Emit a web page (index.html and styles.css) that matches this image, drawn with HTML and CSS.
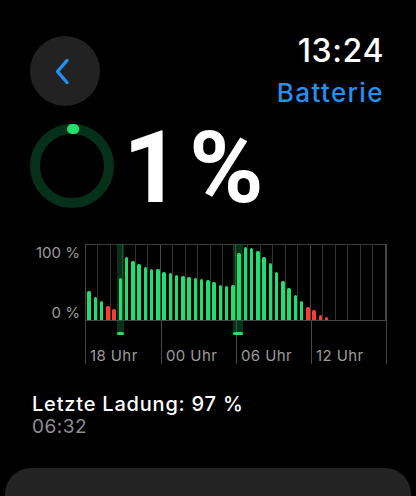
FILE: index.html
```html
<!DOCTYPE html>
<html lang="de">
<head>
  <meta charset="UTF-8">
  <title>Batterie</title>
  <link rel="stylesheet" href="styles.css">
</head>
<body>
  <header class="top">
    <button class="back" aria-label="Zurück">
      <svg width="70" height="70" viewBox="0 0 70 70">
        <path d="M37 24.5 L27.5 35.5 L37 46.5" fill="none" stroke="#2391f3" stroke-width="3.4" stroke-linecap="round" stroke-linejoin="round"/>
      </svg>
    </button>
    <div class="title-col">
      <div class="clock">13:24</div>
      <div class="title">Batterie</div>
    </div>
  </header>

  <section class="hero">
    <svg class="ring" width="84" height="84" viewBox="0 0 84 84">
      <circle cx="42" cy="42" r="37" fill="none" stroke="#05301a" stroke-width="10"/>
      <circle cx="42" cy="42" r="37" fill="none" stroke="#1fe06c" stroke-width="10" stroke-linecap="round" stroke-dasharray="2.3 400" transform="rotate(-90 42 42)"/>
    </svg>
    <div class="percent"><span class="digit">1</span>%</div>
  </section>

  <section class="chart">
    <div class="y-axis">
      <span>100 %</span>
      <span>0 %</span>
    </div>
    <div class="plot-wrap">
      <div class="plot">
        <div class="slot"><i class="bar" style="height:29px"></i></div>
        <div class="slot"><i class="bar" style="height:23px"></i></div>
        <div class="slot"><i class="bar" style="height:19px"></i></div>
        <div class="slot"><i class="bar low" style="height:14px"></i></div>
        <div class="slot"><i class="bar low" style="height:11px"></i></div>
        <div class="slot"><i class="bar" style="height:42px"></i></div>
        <div class="slot"><i class="bar" style="height:63px"></i></div>
        <div class="slot"><i class="bar" style="height:59px"></i></div>
        <div class="slot"><i class="bar" style="height:56px"></i></div>
        <div class="slot"><i class="bar" style="height:53px"></i></div>
        <div class="slot"><i class="bar" style="height:51px"></i></div>
        <div class="slot"><i class="bar" style="height:51px"></i></div>
        <div class="slot"><i class="bar" style="height:48px"></i></div>
        <div class="slot"><i class="bar" style="height:47px"></i></div>
        <div class="slot"><i class="bar" style="height:45px"></i></div>
        <div class="slot"><i class="bar" style="height:44px"></i></div>
        <div class="slot"><i class="bar" style="height:43px"></i></div>
        <div class="slot"><i class="bar" style="height:42px"></i></div>
        <div class="slot"><i class="bar" style="height:41px"></i></div>
        <div class="slot"><i class="bar" style="height:40px"></i></div>
        <div class="slot"><i class="bar" style="height:38px"></i></div>
        <div class="slot"><i class="bar" style="height:35px"></i></div>
        <div class="slot"><i class="bar" style="height:34px"></i></div>
        <div class="slot"><i class="bar" style="height:35px"></i></div>
        <div class="slot"><i class="bar" style="height:67px"></i></div>
        <div class="slot"><i class="bar" style="height:73px"></i></div>
        <div class="slot"><i class="bar" style="height:72px"></i></div>
        <div class="slot"><i class="bar" style="height:69px"></i></div>
        <div class="slot"><i class="bar" style="height:63px"></i></div>
        <div class="slot"><i class="bar" style="height:57px"></i></div>
        <div class="slot"><i class="bar" style="height:48px"></i></div>
        <div class="slot"><i class="bar" style="height:39px"></i></div>
        <div class="slot"><i class="bar" style="height:32px"></i></div>
        <div class="slot"><i class="bar" style="height:25px"></i></div>
        <div class="slot"><i class="bar" style="height:19px"></i></div>
        <div class="slot"><i class="bar low" style="height:13px"></i></div>
        <div class="slot"><i class="bar low" style="height:10px"></i></div>
        <div class="slot"><i class="bar low" style="height:5px"></i></div>
        <div class="slot"><i class="bar low" style="height:3px"></i></div>
      </div>
      <div class="charge charge-a"></div>
      <div class="charge charge-b"></div>
      <div class="x-axis">
        <span>18 Uhr</span>
        <span>00 Uhr</span>
        <span>06 Uhr</span>
        <span>12 Uhr</span>
      </div>
    </div>
  </section>

  <section class="last-charge">
    <div class="last-label">Letzte Ladung: 97 %</div>
    <div class="last-time">06:32</div>
  </section>

  <div class="card"></div>
</body>
</html>
```

FILE: styles.css
```css
body {
  margin: 0;
  background: #000;
  color: #fff;
  font-family: Inter, "Noto Sans", sans-serif;
  width: 416px;
  height: 496px;
  overflow: hidden;
}

.top {
  display: flex;
  justify-content: space-between;
  padding: 36px 32px 0 30px;
}

.back {
  width: 70px;
  height: 70px;
  padding: 0;
  border: none;
  border-radius: 50%;
  background: #222;
}

.back svg {
  display: block;
}

.title-col {
  margin-top: -4px;
  text-align: right;
}

.clock {
  font-size: 32px;
  font-weight: 500;
  line-height: 38px;
  letter-spacing: 0.6px;
}

.title {
  margin-top: 8px;
  font-size: 26px;
  font-weight: 500;
  line-height: 30px;
  color: #2391f3;
  letter-spacing: 1.4px;
}

.hero {
  display: flex;
  align-items: flex-start;
  gap: 9px;
  margin: 16px 0 0 30px;
}

.ring {
  display: block;
}

.percent {
  margin-top: 2px;
  font-family: Roboto, Inter, sans-serif;
  font-size: 101px;
  font-weight: 700;
  line-height: 84px;
}

.percent .digit {
  margin-right: 8px;
}

.chart {
  display: flex;
  margin: 34px 0 0 30px;
}

.y-axis {
  width: 50px;
  height: 78px;
  margin-right: 5px;
  display: flex;
  flex-direction: column;
  justify-content: space-between;
  align-items: flex-end;
  font-size: 15px;
  line-height: 18px;
  color: #9c9c9c;
}

.plot-wrap {
  position: relative;
  width: 300px;
  border-left: 1px solid #444;
  border-right: 1px solid #444;
}

.plot {
  display: flex;
  align-items: flex-end;
  height: 75px;
  border-top: 1px solid #3e3e3e;
  border-bottom: 1px solid #484848;
  background:
    repeating-linear-gradient(to right, transparent 0 74.5px, #484848 74.5px 75px),
    repeating-linear-gradient(to right, transparent 0 11.5px, #333 11.5px 12.5px);
}

.slot {
  position: relative;
  z-index: 1;
  flex: 0 0 6.25px;
  display: flex;
  justify-content: center;
  align-items: flex-end;
  height: 100%;
}

.bar {
  display: block;
  width: 3.3px;
  border-radius: 1.6px 1.6px 0 0;
  background: #1fe06c;
}

.bar.low {
  background: #ff3b30;
}

.charge {
  position: absolute;
  top: 0;
  height: 91px;
  background: rgba(14, 110, 55, 0.45);
}

.charge::after {
  content: "";
  position: absolute;
  left: 0;
  right: 0;
  bottom: 0;
  height: 3px;
  border-radius: 2px;
  background: #1fe06c;
}

.charge-a {
  left: 31px;
  width: 7px;
}

.charge-b {
  left: 147px;
  width: 10px;
}

.x-axis {
  display: flex;
  height: 43px;
}

.x-axis span {
  flex: 0 0 75px;
  box-sizing: border-box;
  padding: 27px 0 0 4px;
  font-size: 15px;
  line-height: 16px;
  color: #9c9c9c;
  letter-spacing: 0.4px;
}

.x-axis span + span {
  border-left: 1px solid #484848;
}

.last-charge {
  margin: 28px 0 0 32px;
}

.last-label {
  font-size: 20px;
  font-weight: 500;
  line-height: 24px;
  letter-spacing: 0.8px;
}

.last-time {
  font-size: 19px;
  line-height: 22px;
  color: #8e8e93;
  letter-spacing: 0.5px;
}

.card {
  margin: 30px 5px 0;
  height: 28px;
  border-radius: 26px 26px 0 0;
  background: #232323;
}
```
